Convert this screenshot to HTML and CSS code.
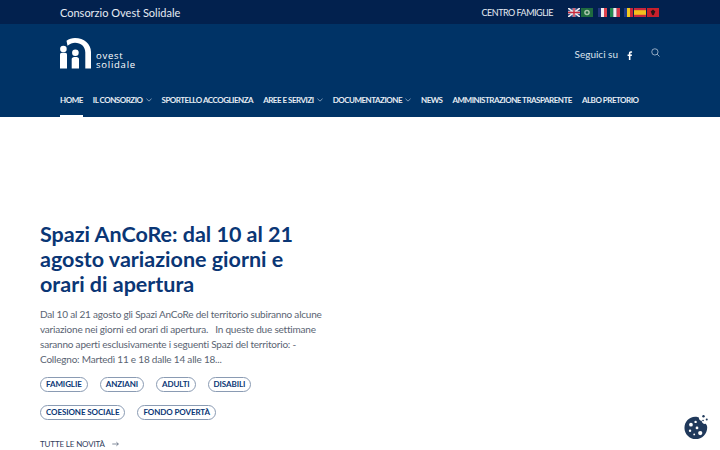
FILE: index.html
```html
<!DOCTYPE html>
<html lang="it">
<head>
    <meta charset="UTF-8">
    <meta name="viewport" content="width=device-width, initial-scale=1.0">
    <title>Consorzio Ovest Solidale</title>
    <link rel="stylesheet" href="styles.css">
</head>
<body>
    <!-- Top bar -->
    <div class="top-bar">
        <span class="top-title">Consorzio Ovest Solidale</span>
        <div class="top-right">
            <a class="top-link" href="#">CENTRO FAMIGLIE</a>
            <div class="flags">
                <svg class="flag" viewBox="0 0 12 9"><rect width="12" height="9" fill="#2b3f7c"/><path d="M0 0L12 9M12 0L0 9" stroke="#eee" stroke-width="1.6"/><path d="M6 0V9M0 4.500H12" stroke="#eee" stroke-width="2.600"/><path d="M6 0V9M0 4.500H12" stroke="#c8283c" stroke-width="1.400"/></svg>
                <svg class="flag" viewBox="0 0 12 9"><rect width="12" height="9" fill="#1f6b3f"/><circle cx="6" cy="4.500" r="2.800" fill="#a9c6aa"/><circle cx="6" cy="4.500" r="1.300" fill="#1f6b3f"/></svg>
                <svg class="flag flag-fr" viewBox="0 0 9 9"><rect width="3" height="9" fill="#24367f"/><rect x="3" width="3" height="9" fill="#f3eef0"/><rect x="6" width="3" height="9" fill="#e0434f"/></svg>
                <svg class="flag flag-it" viewBox="0 0 10 9"><rect width="3.300" height="9" fill="#24894f"/><rect x="3.300" width="3.400" height="9" fill="#f3eef0"/><rect x="6.700" width="3.300" height="9" fill="#d8384a"/></svg>
                <svg class="flag flag-ro" viewBox="0 0 9 9"><rect width="3" height="9" fill="#1f3a86"/><rect x="3" width="3" height="9" fill="#f2c81e"/><rect x="6" width="3" height="9" fill="#c9283c"/></svg>
                <svg class="flag" viewBox="0 0 12 9"><rect width="12" height="9" fill="#c9283c"/><rect y="2.200" width="12" height="4.600" fill="#f2bf1e"/></svg>
                <svg class="flag" viewBox="0 0 12 9"><rect width="12" height="9" fill="#c8202c"/><path d="M6 1.500L8.300 3.500L7 6.500L6 7.500L5 6.500L3.700 3.500Z" fill="#2a1518"/></svg>
            </div>
        </div>
    </div>

    <!-- Header -->
    <header class="site-header">
        <div class="header-row">
            <a class="logo" href="#">
                <svg class="logo-mark" viewBox="0 0 31 31">
                    <path d="M6.500 2.700C9 .9 11.800 0 15 0C24 0 31 6 31 14V30.500H25.300V14.500C25.300 8.500 20.800 4.800 15 4.800C12.400 4.800 10 5.700 7.500 7.800Z" fill="#fff"/>
                    <circle cx="3.400" cy="11" r="3.300" fill="#fff"/>
                    <circle cx="15.400" cy="14.700" r="3.300" fill="#fff"/>
                    <path d="M0 16.500C0 15 1.500 14.800 3.500 14.800C5.500 14.800 7 15 7 16.500V30.500H0Z" fill="#fff"/>
                    <path d="M11.700 21C11.700 19.500 13.400 19 15.400 19C17.400 19 19 19.500 19 21V30.500H11.700Z" fill="#fff"/>
                </svg>
                <span class="logo-text">ovest<br>solidale</span>
            </a>
            <div class="social">
                <span>Seguici su</span>
                <svg class="fb-icon" viewBox="0 0 10 16"><path d="M3 16V9H.7V6.200H3V4.200C3 1.800 4.400 .6 6.500 .6C7.500 .6 8.400 .7 8.700 .7V3.200H7.200C6 3.200 5.800 3.800 5.800 4.600V6.200H8.600L8.200 9H5.800V16Z" fill="#fff"/></svg>
                <svg class="search-icon" viewBox="0 0 12 12"><circle cx="5.200" cy="5.200" r="4.200" fill="none" stroke="#d5e0ec" stroke-width=".9"/><path d="M8.300 8.300L11.300 11.300" stroke="#d5e0ec" stroke-width=".9"/></svg>
            </div>
        </div>
        <nav class="main-nav">
            <a class="nav-item active" href="#">HOME</a>
            <a class="nav-item" href="#">IL CONSORZIO <svg class="caret" viewBox="0 0 8 5"><path d="M.6 .8L4 4L7.400 .8" fill="none" stroke="#d5e0ec" stroke-width=".8"/></svg></a>
            <a class="nav-item" href="#">SPORTELLO ACCOGLIENZA</a>
            <a class="nav-item" href="#">AREE E SERVIZI <svg class="caret" viewBox="0 0 8 5"><path d="M.6 .8L4 4L7.400 .8" fill="none" stroke="#d5e0ec" stroke-width=".8"/></svg></a>
            <a class="nav-item" href="#">DOCUMENTAZIONE <svg class="caret" viewBox="0 0 8 5"><path d="M.6 .8L4 4L7.400 .8" fill="none" stroke="#d5e0ec" stroke-width=".8"/></svg></a>
            <a class="nav-item" href="#">NEWS</a>
            <a class="nav-item" href="#">AMMINISTRAZIONE TRASPARENTE</a>
            <a class="nav-item" href="#">ALBO PRETORIO</a>
        </nav>
    </header>

    <!-- News slide -->
    <main class="slide">
        <h1>Spazi AnCoRe: dal 10 al 21 agosto variazione giorni e orari di apertura</h1>
        <p class="excerpt">Dal 10 al 21 agosto gli Spazi AnCoRe del territorio subiranno alcune variazione nei giorni ed orari di apertura. &nbsp; In queste due settimane saranno aperti esclusivamente i seguenti Spazi del territorio: - Collegno: Martedì 11 e 18 dalle 14 alle 18...</p>
        <div class="tags">
            <a class="tag" href="#">FAMIGLIE</a>
            <a class="tag" href="#">ANZIANI</a>
            <a class="tag" href="#">ADULTI</a>
            <a class="tag" href="#">DISABILI</a>
            <a class="tag" href="#">COESIONE SOCIALE</a>
            <a class="tag" href="#">FONDO POVERTÀ</a>
        </div>
        <a class="all-news" href="#">TUTTE LE NOVITÀ <svg class="arrow" viewBox="0 0 8 6"><path d="M.3 3H7.200M5 .9L7.300 3L5 5.100" fill="none" stroke="#33415c" stroke-width=".7"/></svg></a>
    </main>

    <!-- Cookie button -->
    <svg class="cookie" viewBox="0 0 28 28">
        <path d="M12 3C14 3 15 3.300 16 3.800C15.800 6 17.500 7.500 19 7.200C19.200 9.500 21 11 23.300 10.600C24.300 11.500 25 12.500 25 14.500C25 21.500 19.500 27 12.500 27C6 27 .5 21.500 .5 15C.5 8.500 5.500 3 12 3Z" fill="#20395b"/>
        <circle cx="7.500" cy="11.500" r="2" fill="#fff"/>
        <circle cx="12.500" cy="8.500" r="1.300" fill="#fff"/>
        <circle cx="14" cy="15" r="1.500" fill="#fff"/>
        <circle cx="6.500" cy="18" r="1.300" fill="#fff"/>
        <circle cx="17.500" cy="20.500" r="2.300" fill="#fff"/>
        <circle cx="11" cy="22" r="1" fill="#fff"/>
        <circle cx="21" cy="2.500" r="1.300" fill="#20395b"/>
        <circle cx="24.500" cy="6" r="1.100" fill="#20395b"/>
        <circle cx="20.500" cy="7" r=".9" fill="#20395b"/>
    </svg>
</body>
</html>
```

FILE: styles.css
```css
:root {
    --top-bg: #02214e;
    --header-bg: #003366;
    --title-color: #0a3675;
    --text-color: #5a6472;
}

html, body {
    height: 100%;
}

body {
    margin: 0;
    padding: 0;
    font-family: 'Lato', sans-serif;
    background-color: #ffffff;
    overflow: hidden;
    position: relative;
}

a {
    text-decoration: none;
    color: inherit;
}

/* Top bar */
.top-bar {
    height: 24px;
    background-color: var(--top-bg);
    color: #e6ecf3;
    display: flex;
    justify-content: space-between;
    align-items: center;
    padding: 0 61px 0 60px;
}

.top-title {
    font-size: 11px;
}

.top-right {
    display: flex;
    align-items: center;
}

.top-link {
    font-size: 9px;
    letter-spacing: -.5px;
    margin-right: 14px;
}

.flags {
    display: flex;
    align-items: center;
}

.flag {
    width: 12px;
    height: 9px;
    margin-left: 1px;
}

.flag-fr {
    width: 9px;
    margin-left: 5px;
}

.flag-it {
    width: 10px;
    margin-left: 3px;
}

.flag-ro {
    width: 9px;
    margin-left: 4px;
}

/* Header */
.site-header {
    height: 93px;
    background-color: var(--header-bg);
    padding: 0 60px;
    display: flex;
    flex-direction: column;
    box-sizing: border-box;
}

.header-row {
    display: flex;
    justify-content: space-between;
    align-items: flex-start;
    padding-top: 14px;
    height: 70px;
    box-sizing: border-box;
}

.logo {
    display: flex;
    align-items: flex-end;
}

.logo-mark {
    width: 31px;
    height: 31px;
}

.logo-text {
    color: #ffffff;
    font-family: 'Open Sans', sans-serif;
    font-size: 9.500px;
    line-height: 9px;
    letter-spacing: .75px;
    margin-left: 5px;
}

.social {
    display: flex;
    align-items: center;
    color: #dbe4ee;
    font-size: 10px;
    margin-top: 10px;
}

.fb-icon {
    width: 6px;
    height: 9px;
    margin-left: 9px;
    margin-top: 2px;
}

.search-icon {
    width: 9px;
    height: 9px;
    margin-left: 18px;
    margin-top: -3px;
}

.main-nav {
    display: flex;
    gap: 10px;
}

.nav-item {
    color: #e6ecf3;
    font-size: 8px;
    letter-spacing: -.5px;
    font-weight: 700;
    display: flex;
    align-items: center;
    gap: 3px;
    height: 12px;
    padding-bottom: 9px;
    border-bottom: 2px solid transparent;
    white-space: nowrap;
}

.nav-item.active {
    border-bottom-color: #ffffff;
}

.caret {
    width: 6px;
    height: 4px;
}

/* News slide */
.slide {
    width: 285px;
    margin-left: 40px;
    padding-top: 105px;
}

h1 {
    margin: 0;
    color: var(--title-color);
    font-size: 21.500px;
    font-weight: 700;
    line-height: 25px;
}

.excerpt {
    margin: 10px 0 0;
    color: var(--text-color);
    font-size: 10px;
    letter-spacing: -.2px;
    line-height: 15px;
}

.tags {
    display: flex;
    flex-wrap: wrap;
    gap: 13px 12px;
    margin-top: 10px;
}

.tag {
    color: var(--title-color);
    font-size: 8px;
    letter-spacing: -.1px;
    font-weight: 700;
    line-height: 13px;
    border: 1px solid #8a9bb3;
    border-radius: 8px;
    padding: 0 5px;
}

.all-news {
    display: flex;
    align-items: center;
    gap: 7px;
    margin-top: 19px;
    color: #33415c;
    font-size: 8px;
    letter-spacing: -.15px;
}

.arrow {
    width: 7px;
    height: 6px;
}

/* Cookie button */
.cookie {
    position: absolute;
    right: 10px;
    bottom: 9px;
    width: 26px;
    height: 28px;
}
```
